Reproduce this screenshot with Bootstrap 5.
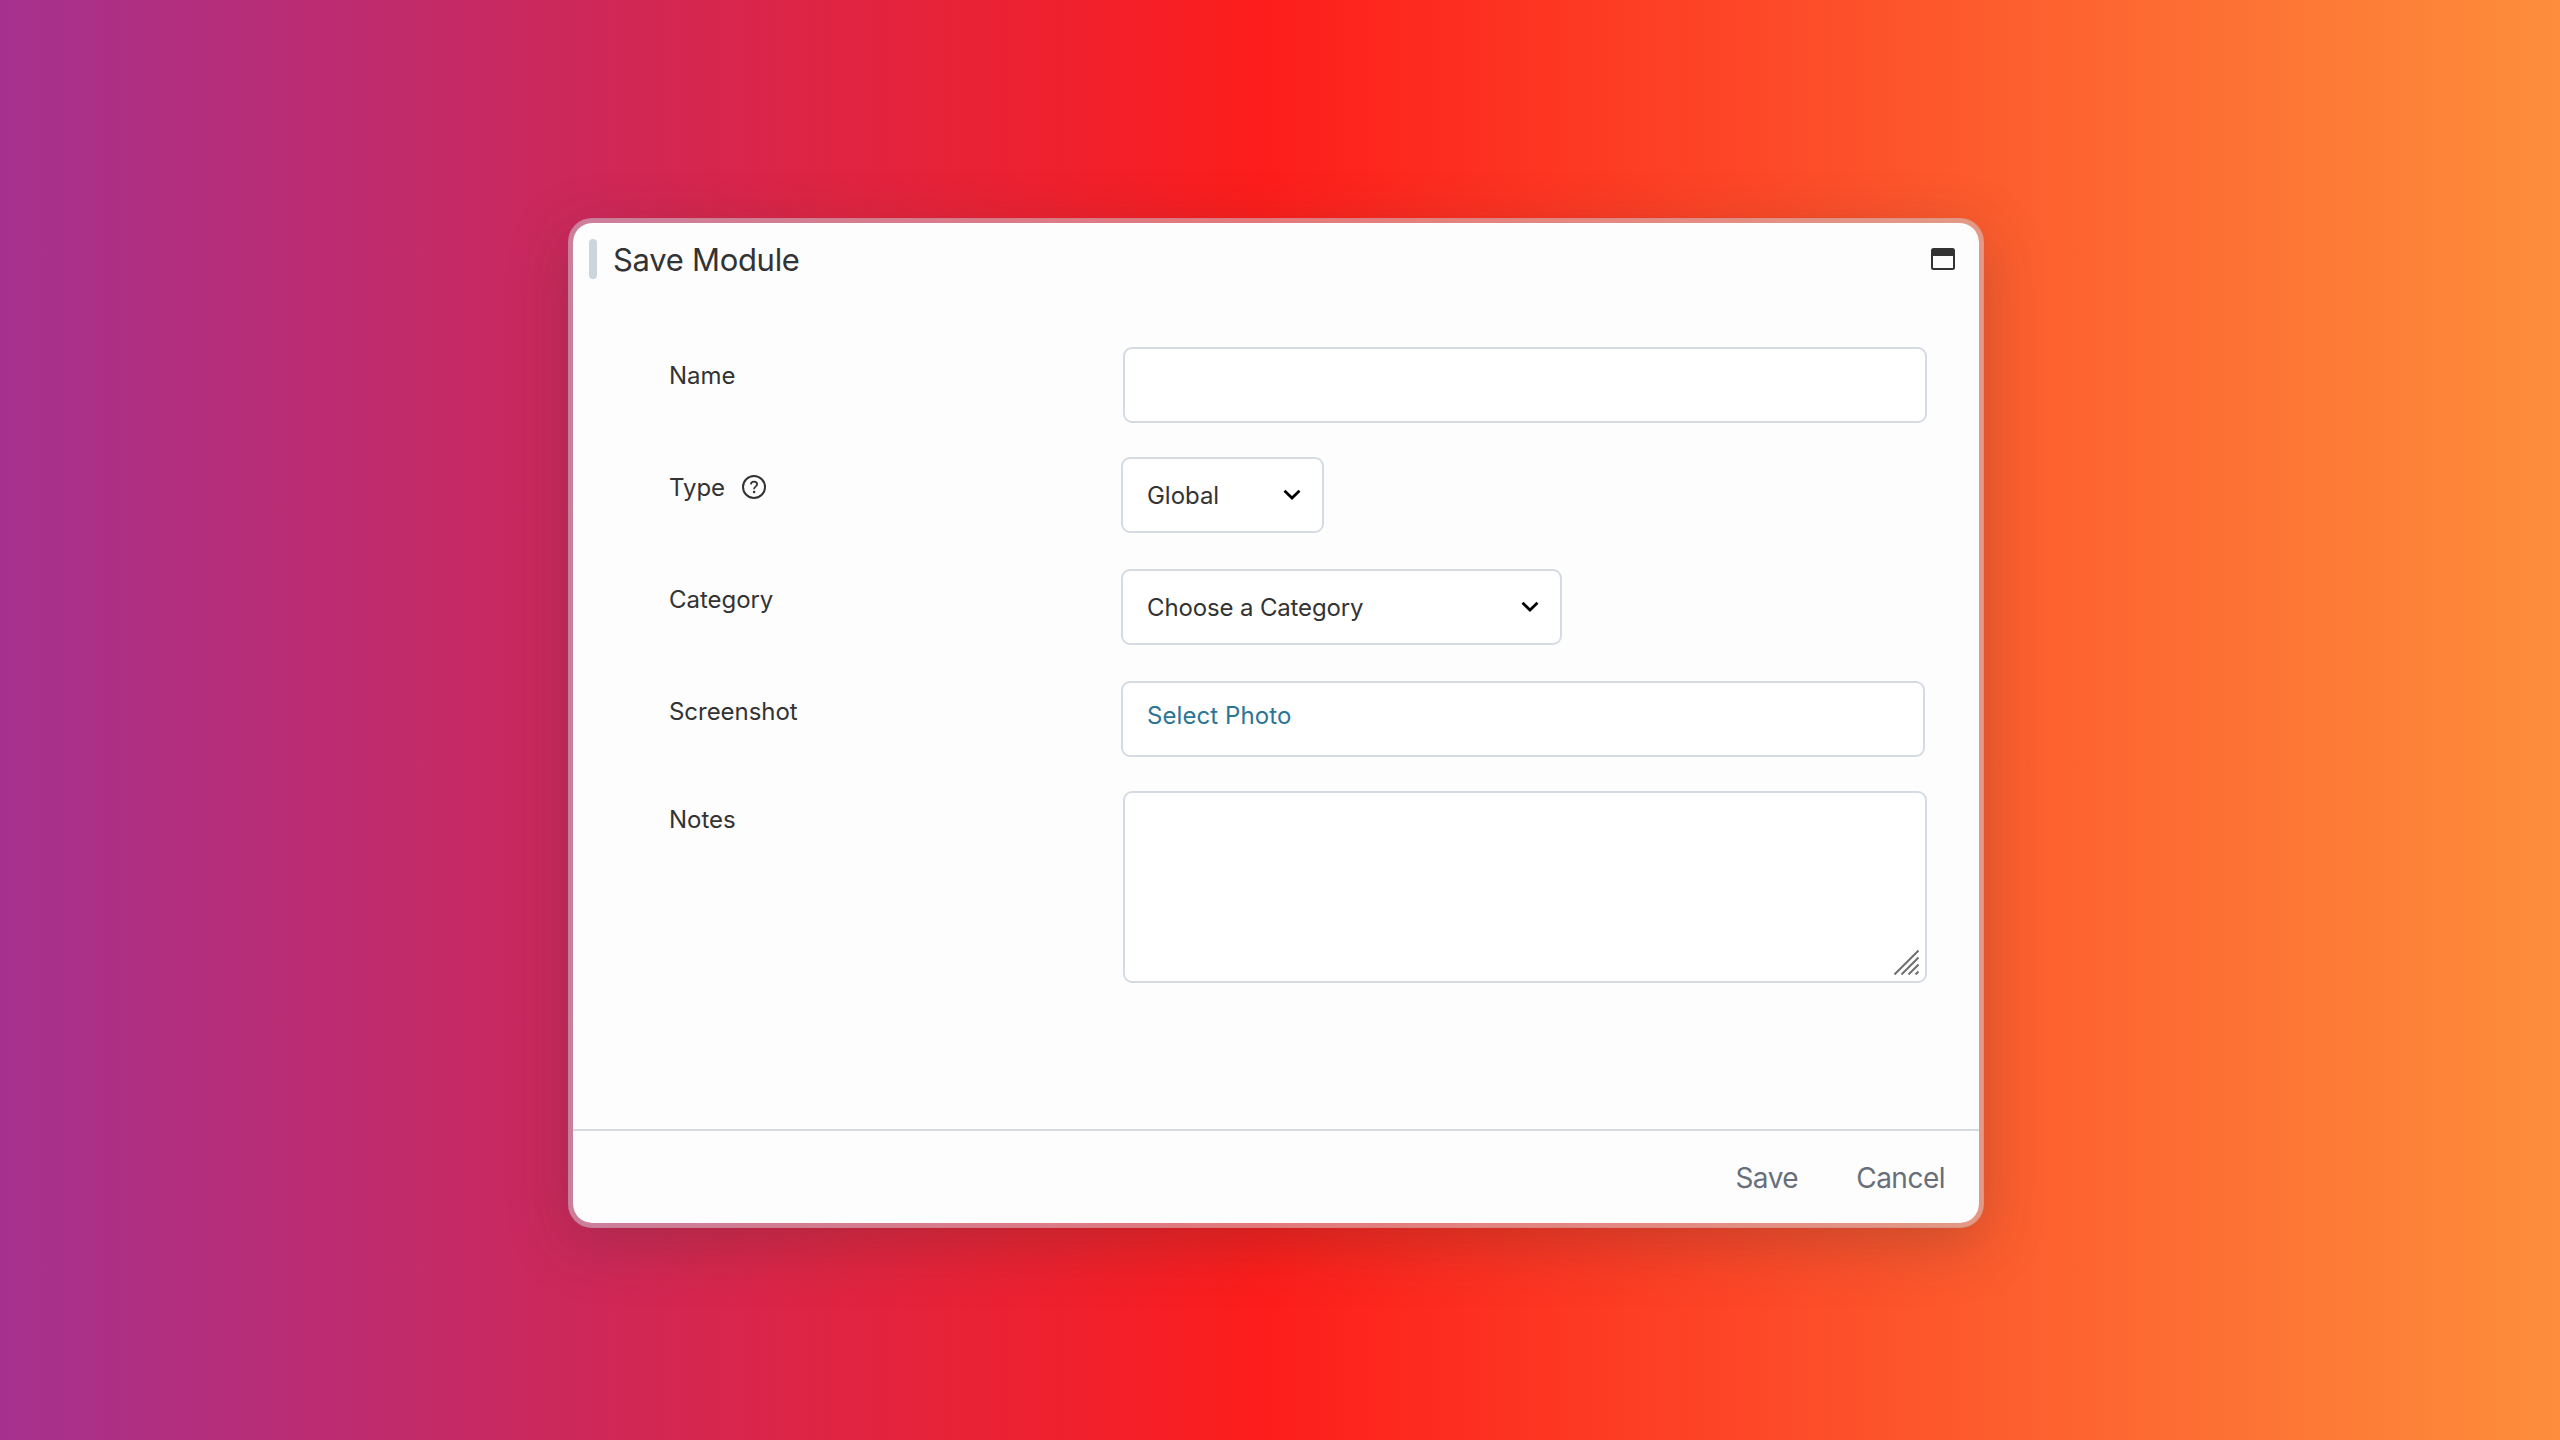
<!DOCTYPE html>
<html lang="en">
<head>
<meta charset="utf-8">
<title>Save Module</title>
<link rel="stylesheet" href="https://cdn.jsdelivr.net/npm/bootstrap@5.3.0/dist/css/bootstrap.min.css">
<style>
body{font-family:Inter,"Liberation Sans",sans-serif;font-size:24px;line-height:36px;color:#333;background:linear-gradient(90deg,#a5318f 0%,#fd1d1b 49.3%,#fd8e3c 100%);letter-spacing:-.04px}
.save-dialog{width:1416px;height:1010px;margin-top:6px;border:5px solid rgba(204,213,222,.5);border-radius:24px;background:#fdfdfd;background-clip:padding-box;box-shadow:0 16px 60px rgba(51,51,51,.26)}
.dialog-head{height:72px;padding:0 24px 0 16px}
.grip{width:8px;height:40px;border-radius:4px;background:#ccd4dc}
.dialog-title{font-size:31px;line-height:40px;font-weight:400;letter-spacing:-.3px;margin:1px 0 0 16px}
.dialog-form{padding:50px 52px 0 96px}
.form-line{height:112px}
.field-label{width:452px;padding-top:13px;flex:none}
.help-mark{margin:0 0 2px 17px}
.field-box,.field-box.form-control{border:2px solid #d5dbe3;border-radius:9px;background:#fff;height:76px;padding:0 24px;color:#333;font-size:24px;line-height:36px;letter-spacing:inherit}
.field-box.inset{margin:2px 0 0 2px;width:804px}
textarea.field-box.form-control{height:192px;resize:none;display:block}
.type-pick,.category-pick{padding:2px 21px 0 24px!important}
.type-pick svg,.category-pick svg{margin-bottom:2px}
.type-pick{width:203px}
.category-pick{width:441px;letter-spacing:-.14px!important}
.photo-box{width:804px;padding-bottom:6px!important}
.photo-box a{color:#2b7595;letter-spacing:.08px}
.resizer{right:8px;bottom:8px}
.dialog-foot{height:94px;border-top:2px solid #d4dadf;padding:2px 34px 0 0;gap:58px}
.dialog-foot .btn{font-size:28px;line-height:40px;letter-spacing:-.5px;color:#676f7a;padding:0;border:0}
</style>
<script src="https://cdn.jsdelivr.net/npm/bootstrap@5.3.0/dist/js/bootstrap.bundle.min.js"></script>
</head>
<body class="vh-100 overflow-hidden d-flex justify-content-center align-items-center">
<main class="save-dialog d-flex flex-column me-2">
  <header class="dialog-head d-flex align-items-center">
    <span class="grip"></span>
    <h1 class="dialog-title">Save Module</h1>
    <svg class="ms-auto" width="24" height="22" viewBox="0 0 24 22"><rect x="1" y="1" width="22" height="20" rx="1.5" fill="none" stroke="#333" stroke-width="2"/><path d="M1 1.5h22V8H1z" fill="#333"/></svg>
  </header>
  <form class="dialog-form flex-grow-1">
    <div class="form-line d-flex align-items-start">
      <label class="field-label" for="name">Name</label>
      <input id="name" type="text" class="form-control field-box inset">
    </div>
    <div class="form-line d-flex align-items-start">
      <div class="field-label d-flex align-items-center">Type
        <svg class="help-mark" width="24" height="24" viewBox="0 0 24 24" fill="none" stroke="#333"><circle cx="12" cy="12" r="11" stroke-width="2"/><path d="M8.9 9.4C9 7.6 10.2 6.7 12 6.7s3.1 1 3.1 2.6c0 2.4-3 2.3-3 4.7v.3" stroke-width="1.8"/><circle cx="12.1" cy="17" r="1.3" fill="#333" stroke="none"/></svg>
      </div>
      <button type="button" class="btn field-box type-pick d-flex align-items-center justify-content-between">Global
        <svg width="18" height="12" viewBox="0 0 18 12" fill="none" stroke="#000" stroke-width="2.8"><path d="M1.5 1.8 9 9.1l7.5-7.3"/></svg>
      </button>
    </div>
    <div class="form-line d-flex align-items-start">
      <div class="field-label">Category</div>
      <button type="button" class="btn field-box category-pick d-flex align-items-center justify-content-between">Choose a Category
        <svg width="18" height="12" viewBox="0 0 18 12" fill="none" stroke="#000" stroke-width="2.8"><path d="M1.5 1.8 9 9.1l7.5-7.3"/></svg>
      </button>
    </div>
    <div class="form-line d-flex align-items-start" style="height:108px">
      <div class="field-label">Screenshot</div>
      <div class="field-box photo-box d-flex align-items-center"><a href="#" class="text-decoration-none">Select Photo</a></div>
    </div>
    <div class="d-flex align-items-start">
      <label class="field-label" for="notes">Notes</label>
      <div class="position-relative">
        <textarea id="notes" class="form-control field-box inset"></textarea>
        <svg class="resizer position-absolute" width="25" height="25" viewBox="0 0 25 25" stroke="#6f6f6f" stroke-width="2"><path d="M.5 24.5l24-24M7.5 24.5l17-17M14.5 24.5l10-10M21.5 24.5l3-3"/></svg>
      </div>
    </div>
  </form>
  <footer class="dialog-foot d-flex align-items-center justify-content-end">
    <button type="button" class="btn">Save</button>
    <button type="button" class="btn">Cancel</button>
  </footer>
</main>
</body>
</html>
